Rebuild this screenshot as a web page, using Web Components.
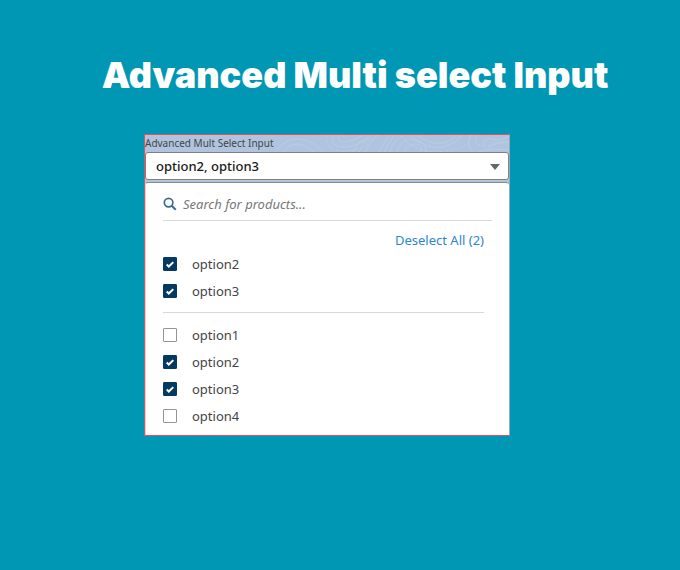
<!DOCTYPE html>
<html lang="en">
<head>
<meta charset="utf-8">
<meta name="viewport" content="width=device-width, initial-scale=1">
<title>Advanced Multi select Input</title>
<style>
	html {
		min-height: 100%;
		background: #0097b5;
	}

	body {
		margin: 0;
		font-family: "Noto Sans", "Open Sans", sans-serif;
		color: #444;
	}
</style>
</head>
<body>
<ms-page>
	<span slot="title">Advanced Multi select Input</span>
	<ms-select label="Advanced Mult Select Input" options="option1,option2,option3,option4" selected="option2,option3"></ms-select>
</ms-page>

<script>
class MsPage extends HTMLElement {
	constructor() {
		super();
		this.attachShadow({ mode: "open" });
		this.shadowRoot.innerHTML = `
			<style>
				:host {
					display: block;
				}

				h1 {
					margin: 0;
					padding: 51px 0 35px 30px;
					font: 900 36px/48px Inter, "Liberation Sans", sans-serif;
					text-align: center;
					color: white;
				}

				main {
					padding: 0 170px 32px 144px;
				}
			</style>
			<h1><slot name="title"></slot></h1>
			<main><slot></slot></main>
		`;
	}
}

class MsOption extends HTMLElement {
	constructor() {
		super();
		this.attachShadow({ mode: "open" });
		this.shadowRoot.innerHTML = `
			<style>
				:host {
					display: block;
				}

				label {
					display: grid;
					grid-template-columns: 14px 1fr;
					gap: 15px;
					align-items: center;
					height: 27px;
					font-size: 13px;
					cursor: pointer;
				}

				.box {
					display: grid;
				}

				.box > * {
					grid-area: 1 / 1;
				}

				input {
					appearance: none;
					box-sizing: border-box;
					width: 14px;
					height: 14px;
					margin: 0;
					border: 1px solid #949494;
					border-radius: 1px;
					background: white;
				}

				input:checked {
					border-color: #043a61;
					background: #043a61;
				}

				svg {
					width: 14px;
					height: 14px;
					pointer-events: none;
					visibility: hidden;
				}

				input:checked + svg {
					visibility: visible;
				}
			</style>
			<label for="check">
				<span class="box">
					<input type="checkbox" id="check">
					<svg viewBox="0 0 14 14" fill="none" stroke="white" stroke-width="2"><path d="M3.7 7.5l2.1 2 4.5-4.4"/></svg>
				</span>
				<span><slot></slot></span>
			</label>
		`;
	}

	connectedCallback() {
		const input = this.shadowRoot.querySelector("input");
		input.checked = this.hasAttribute("checked");
		input.addEventListener("change", () => {
			this.dispatchEvent(new CustomEvent("toggle-option", { bubbles: true, detail: this.textContent }));
		});
	}
}

class MsSearch extends HTMLElement {
	constructor() {
		super();
		this.attachShadow({ mode: "open" });
		this.shadowRoot.innerHTML = `
			<style>
				:host {
					display: flex;
					align-items: center;
					gap: 6px;
					height: 32px;
					border-bottom: 1px solid #d8d8d8;
				}

				svg {
					flex: none;
					width: 14px;
					height: 14px;
				}

				input {
					flex: 1;
					min-width: 0;
					padding: 0;
					border: 0;
					outline: 0;
					background: none;
					font: italic 13px/20px "Noto Sans", sans-serif;
					color: #444;
				}

				input::placeholder {
					color: #777;
					opacity: 1;
				}
			</style>
			<svg viewBox="0 0 14 14" fill="none" stroke="#3c6a8e" stroke-width="1.7"><circle cx="5.6" cy="5.6" r="4.3"/><path d="M8.7 8.7l4 4" stroke-width="2"/></svg>
			<input type="text" aria-label="Search for products" placeholder="Search for products...">
		`;
	}
}

class MsSelect extends HTMLElement {
	constructor() {
		super();
		this.attachShadow({ mode: "open" });
		this.shadowRoot.innerHTML = `
			<style>
				:host {
					display: block;
					border: 1px solid #e0525c;
					border-right-color: #9aa9b8;
					background: #b0c4df;
				}

				.head {
					position: relative;
					height: 17px;
				}

				.head svg {
					position: absolute;
					inset: 0;
					width: 100%;
					height: 100%;
				}

				.head label {
					position: relative;
					display: block;
					font-size: 10px;
					line-height: 17px;
					color: #444;
				}

				.field {
					display: grid;
					align-items: center;
				}

				.field > * {
					grid-area: 1 / 1;
				}

				select {
					appearance: none;
					box-sizing: border-box;
					width: 100%;
					height: 28px;
					padding: 0 30px 0 10px;
					border: 1px solid #808080;
					border-radius: 3px;
					background: white;
					font: 500 13px/20px "Noto Sans", sans-serif;
					color: #181818;
				}

				.arrow {
					justify-self: end;
					width: 10px;
					height: 6px;
					margin: 2px 9px 0 0;
					pointer-events: none;
				}

				.panel {
					margin-top: 2px;
					padding: 5px 17px 6px;
					border-top: 1px solid #8a8a8a;
					border-left: 1px solid #d5d5d5;
					border-radius: 3px 3px 0 0;
					background: white;
				}

				.lists {
					margin-right: 8px;
				}

				.actions {
					display: flex;
					justify-content: flex-end;
					padding-top: 9px;
				}

				a {
					font-size: 13px;
					line-height: 20px;
					color: #2b86d3;
					text-decoration: none;
				}

				hr {
					height: 1px;
					margin: 8px 0;
					border: 0;
					background: #d8d8d8;
				}
			</style>
			<div class="head">
				<svg viewBox="0 0 364 17" preserveAspectRatio="xMaxYMid slice" fill="none" stroke="#bbcde5">
					<path d="M130 17q10-14 24-13t24 13M138 17q8-9 16-8t15 8M188 0q-4 13 12 12t26-12M193 0q0 8 8 7t17-7M208 17q3-9 14-14M214 17q3-8 13-14M220 17q4-9 12-17"/>
					<path d="M234 17l10-17M239 17l10-17M245 17q3-12 15-17M252 17q4-15 18-12t10 14M259 17q4-9 12-8t4 8M264 0q20 16 34 12t19-12M272 0q14 10 25 8t14-8M326 0q-6 10 2 17M338 12q0-10 9-8t17-3M333 17q11-4 31-2M344 13q2-7 20-6"/>
					<path stroke-dasharray="3 2" d="M182 0q-3 17 18 16t34-16M255 0q16 20 45 16t24-16M331 0q-3 14 16 10t17 0"/>
				</svg>
				<label for="value"></label>
			</div>
			<div class="field">
				<select id="value"><option></option></select>
				<svg class="arrow" viewBox="0 0 10 6"><path fill="#666" d="M0 0h10L5 6z"/></svg>
			</div>
			<div class="panel">
				<ms-search></ms-search>
				<div class="lists">
					<div class="actions"><a href="#"></a></div>
					<div class="chosen"></div>
					<hr>
					<div class="all"></div>
				</div>
			</div>
		`;
	}

	connectedCallback() {
		this._options = this.getAttribute("options").split(",");
		this._selected = this.getAttribute("selected").split(",");
		this.shadowRoot.querySelector("label").textContent = this.getAttribute("label");

		this.shadowRoot.querySelector("a").addEventListener("click", (event) => {
			event.preventDefault();
			this._selected = [];
			this._render();
		});
		this.shadowRoot.addEventListener("toggle-option", (event) => {
			this._toggle(event.detail);
		});
		this._render();
	}

	_toggle(name) {
		this._selected = this._options.filter(
			(option) => this._selected.includes(option) !== (option === name)
		);
		this._render();
	}

	_render() {
		const root = this.shadowRoot;
		root.querySelector("option").textContent = this._selected.join(", ");
		root.querySelector("a").textContent = `Deselect All (${this._selected.length})`;
		root.querySelector(".chosen").replaceChildren(...this._selected.map((name) => this._row(name)));
		root.querySelector(".all").replaceChildren(...this._options.map((name) => this._row(name)));
	}

	_row(name) {
		const row = document.createElement("ms-option");
		row.textContent = name;
		row.toggleAttribute("checked", this._selected.includes(name));
		return row;
	}
}

customElements.define("ms-page", MsPage);
customElements.define("ms-option", MsOption);
customElements.define("ms-search", MsSearch);
customElements.define("ms-select", MsSelect);
</script>
</body>
</html>
